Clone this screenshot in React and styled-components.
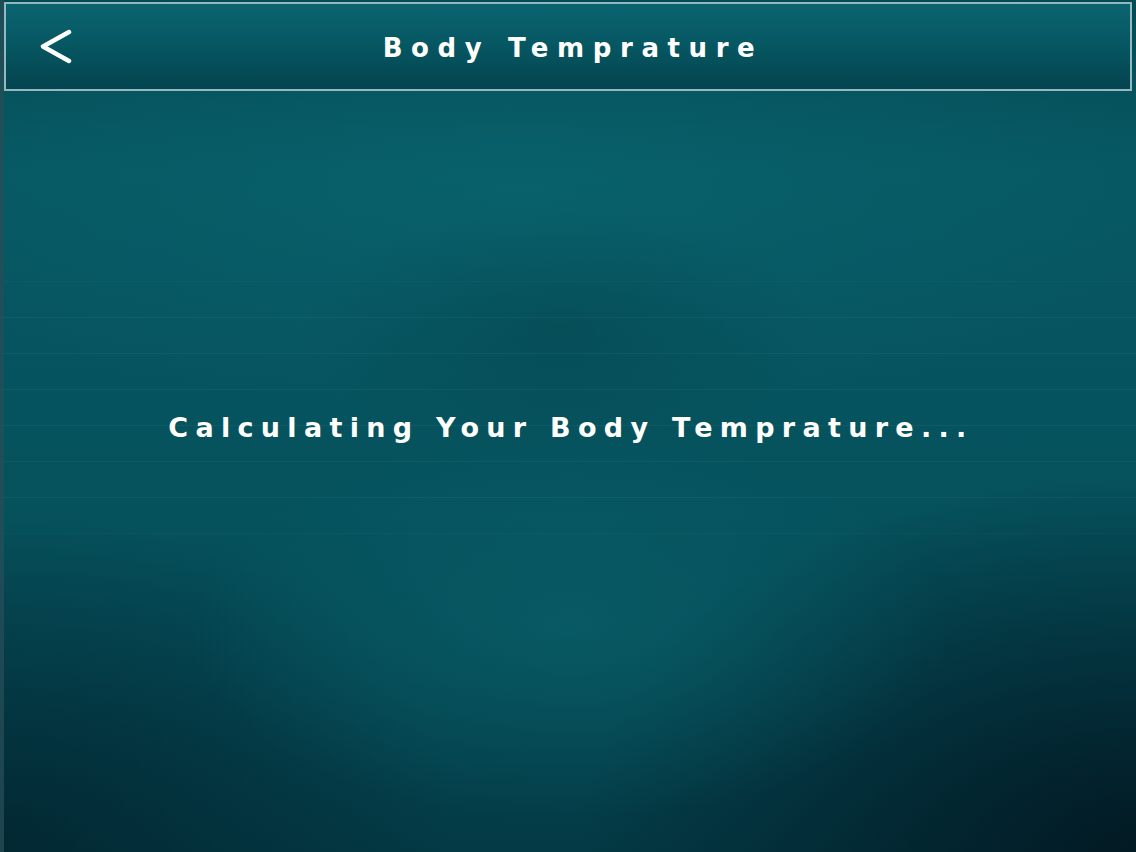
import React from "react";
import styled, { createGlobalStyle } from "styled-components";

const Global = createGlobalStyle`
  html, body { margin: 0; padding: 0; background: #063f48; }
  #root { height: 852px; }
`;

const Screen = styled.div`
  position: relative;
  width: 1136px;
  height: 852px;
  overflow: hidden;
  display: flex;
  flex-direction: column;
  font-family: "DejaVu Sans", "Lato", sans-serif;
  color: #ffffff;
  background:
    radial-gradient(ellipse 380px 190px at 570px 630px, rgba(10, 104, 112, 0.5), transparent 100%),
    radial-gradient(ellipse 260px 120px at 560px 330px, rgba(3, 60, 70, 0.35), transparent 100%),
    radial-gradient(ellipse 700px 220px at 520px 190px, rgba(10, 104, 114, 0.55), transparent 100%),
    radial-gradient(ellipse 560px 380px at 1136px 852px, rgba(2, 22, 32, 0.9), transparent 100%),
    radial-gradient(ellipse 460px 340px at 0px 852px, rgba(2, 32, 42, 0.7), transparent 100%),
    linear-gradient(to bottom, #044a55 0%, #065862 20%, #06545f 40%, #05525d 60%, #044753 80%, #033a45 100%);
`;

const GridLines = styled.div`
  position: absolute;
  left: 0;
  right: 0;
  top: 246px;
  height: 330px;
  pointer-events: none;
  background: repeating-linear-gradient(
    to bottom,
    transparent 0px,
    transparent 35px,
    rgba(110, 180, 190, 0.09) 35px,
    rgba(110, 180, 190, 0.09) 36px
  );
  -webkit-mask-image: linear-gradient(to bottom, transparent, #000 20%, #000 80%, transparent);
  mask-image: linear-gradient(to bottom, transparent, #000 20%, #000 80%, transparent);
`;

const LeftEdge = styled.div`
  position: absolute;
  left: 0;
  top: 0;
  bottom: 0;
  width: 4px;
  background: rgba(40, 78, 88, 0.75);
`;

const Header = styled.header`
  position: relative;
  margin: 2px 4px 0 4px;
  height: 85px;
  border: 2px solid #93b9bf;
  background: linear-gradient(to bottom, #0a6470 0%, #065863 45%, #03444f 100%);
  display: grid;
  grid-template-columns: 100px 1fr 100px;
  align-items: center;
`;

const BackButton = styled.button`
  all: unset;
  display: flex;
  align-items: center;
  padding-left: 32px;
  height: 100%;
  cursor: pointer;
`;

const Title = styled.h1`
  margin: 0;
  text-align: center;
  font-size: 26px;
  font-weight: bold;
  letter-spacing: 8.6px;
  line-height: 1;
  padding-top: 2px;
  padding-left: 10px;
`;

const Body = styled.main`
  position: relative;
  flex: 1;
  display: flex;
  justify-content: center;
  padding-top: 323px;
`;

const Status = styled.p`
  margin: 0;
  font-size: 27px;
  font-weight: bold;
  letter-spacing: 7.3px;
  line-height: 1;
  padding-left: 6px;
`;

export default function App() {
  return (
    <>
      <Global />
      <Screen>
        <GridLines />
        <LeftEdge />
        <Header>
          <BackButton aria-label="Back">
            <svg width="36" height="36" viewBox="0 0 36 36">
              <path
                d="M31 3 L5 17.5 L31 32"
                fill="none"
                stroke="#ffffff"
                strokeWidth="4.5"
                strokeLinecap="round"
                strokeLinejoin="round"
              />
            </svg>
          </BackButton>
          <Title>Body Temprature</Title>
          <span />
        </Header>
        <Body>
          <Status>Calculating Your Body Temprature...</Status>
        </Body>
      </Screen>
    </>
  );
}
